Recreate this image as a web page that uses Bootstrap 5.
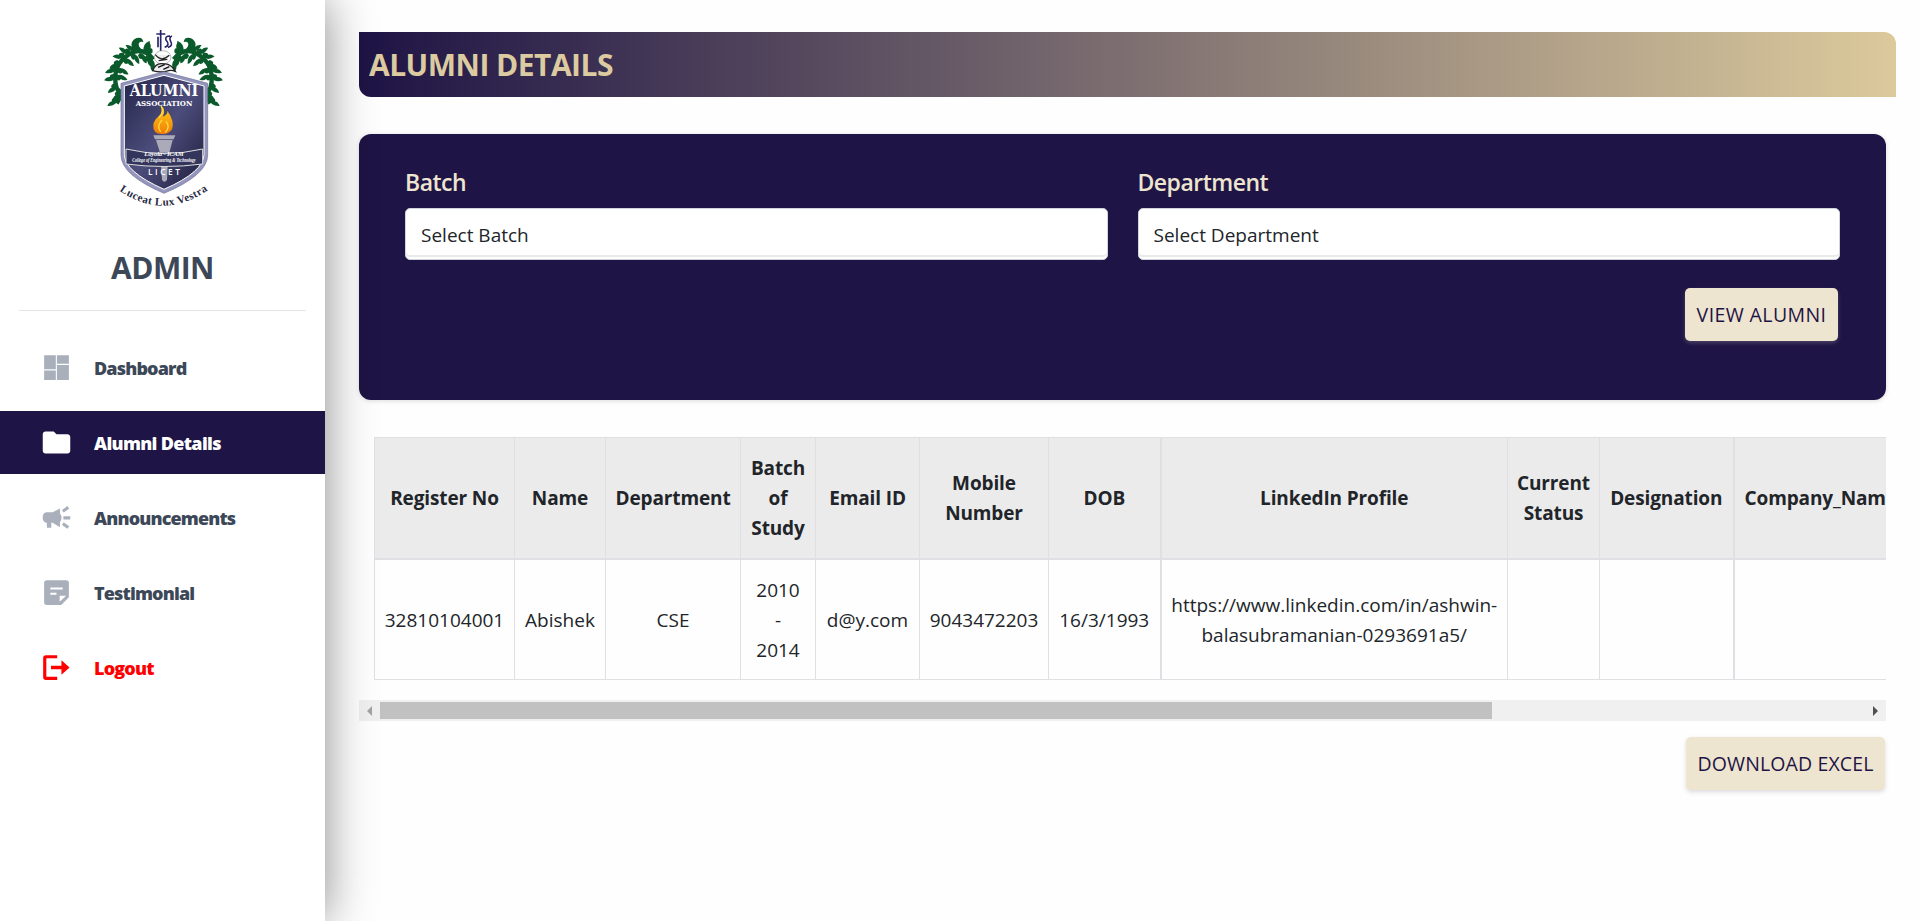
<!DOCTYPE html>
<html lang="en">
<head>
<meta charset="utf-8">
<meta name="viewport" content="width=device-width, initial-scale=1">
<title>Alumni Details</title>
<link href="https://cdn.jsdelivr.net/npm/bootstrap@5.3.0/dist/css/bootstrap.min.css" rel="stylesheet">
<style>
body{font-family:"Open Sans","Noto Sans",sans-serif;font-size:19px;background:#fefefe;color:#212529;height:921px;overflow:hidden}
.side{width:325px;height:921px;background:#fff;box-shadow:0 0 45px rgba(0,0,0,.46);z-index:2}
.crest{width:150px;height:195px;margin:20px 0 0 90px}
.role{font-size:30px;line-height:36px;font-weight:700;letter-spacing:-.5px;color:#3c4858;margin-top:35px}
.rule{height:1px;background:#e5e5e5;margin:24px 19px 25px}
.menu{gap:12px}
.menu a{height:63px;padding-left:40px;font-weight:800;font-size:18px;letter-spacing:-.85px;color:#3c4858;text-decoration:none}
.menu span{padding-top:2px}
.menu svg{width:33px;height:33px;fill:#a9afbb;margin:-1px 21px 0 0;flex:none}
.menu a.current{background:#1e1445;color:#fff;letter-spacing:-.68px}
.menu a.current svg{fill:#fff}
.menu a.leave{color:#f00}
.menu a.leave svg{fill:#f00}
.main{padding:32px 24px 0 34px}
.titlebar{height:65px;padding-left:10px;background:linear-gradient(90deg,#1e1445,#dcca9c);border-radius:0 12px 0 12px}
.titlebar h1{font-size:30px;font-weight:700;letter-spacing:-.52px;color:#dccaa0;margin:0}
.panel{height:266px;margin:37px 10px 0 0;padding:32px 46px 0;background:#1e1445;border-radius:12px;box-shadow:0 1px 5px rgba(0,0,0,.14)}
.panel label{font-size:23px;line-height:32px;font-weight:600;letter-spacing:-.5px;color:#eee5d0;margin-bottom:10px}
.panel .row{--bs-gutter-x:30px}
.picker{height:52px;background:#fff;border:1px solid #ced4da;border-radius:5px;padding:1px 0 0 15px;line-height:50px;box-shadow:inset 0 -2px #fff,inset 0 -4px #e9ebeb}
.gold{height:53px;background:#eee5d0;color:#1e1445;font-size:19.5px;border:0;border-radius:5px;padding:0;box-shadow:0 2px 4px rgba(160,150,160,.35)}
.gold:hover{background:#eee5d0}
.view{width:153px;letter-spacing:.4px}
.download{width:199px;letter-spacing:.12px}
.view-row{padding:28px 2px 0 0}
.download-row{padding:16px 11px 0 0}
.scroller{margin:37px 10px 0 0;padding-left:15px;overflow:hidden}
.scroller table{table-layout:fixed;width:1860px;margin:0;border-collapse:collapse;text-align:center;line-height:30px}
.scroller th,.scroller td{border:1px solid #dee0e3;height:121px;padding:1px 0 0;vertical-align:middle}
.scroller th{background:#ebebeb;font-weight:700;letter-spacing:-.12px;border-bottom-width:2px}
.scroller .thick{border-left-width:2px}
.scroller .company{text-align:left;padding-left:10px}
.track{height:21px;margin:20px 10px 0 0;background:#f0f0f0;padding:0 7px 0 8px}
.thumb{width:1112px;height:17px;background:#c1c1c1;margin-left:7px}
</style>
</head>
<body>
<div class="d-flex">
<aside class="side position-relative flex-shrink-0 d-flex flex-column">
<svg class="crest flex-shrink-0" viewBox="0 0 450 585">
<defs>
<linearGradient id="navy" x1="0" y1="0" x2="1" y2="1"><stop offset="0" stop-color="#24254a"/><stop offset=".5" stop-color="#4d4d7c"/><stop offset="1" stop-color="#1d1d3c"/></linearGradient>
<linearGradient id="fire" x1="0" y1="0" x2="0" y2="1"><stop offset="0" stop-color="#ffd21c"/><stop offset="1" stop-color="#f07c06"/></linearGradient>
<path id="motto" d="M88 512Q220 604 358 508"/>
<path id="leaf" d="M0 2Q6-20 32-18Q28-6 18-4Q22 4 8 8Z"/>
<g id="garland" fill="#0b5a2c">
<path d="M190 118Q160 80 122 100Q78 125 76 170T98 218L80 250" fill="none" stroke="#0b5a2c" stroke-width="13"/>
<use href="#leaf" transform="translate(176 102) rotate(-60)"/><use href="#leaf" transform="translate(160 94) rotate(-30)"/><use href="#leaf" transform="translate(138 94) rotate(-120)"/><use href="#leaf" transform="translate(118 102) rotate(-120)"/><use href="#leaf" transform="translate(104 110) rotate(-150)"/><use href="#leaf" transform="translate(90 128) rotate(180)"/><use href="#leaf" transform="translate(80 146) rotate(190)"/><use href="#leaf" transform="translate(78 172) rotate(195)"/><use href="#leaf" transform="translate(82 196) rotate(170)"/><use href="#leaf" transform="translate(92 216) rotate(160)"/><use href="#leaf" transform="translate(84 240) rotate(180)"/>
<use href="#leaf" transform="translate(84 144) rotate(60)"/><use href="#leaf" transform="translate(78 166) rotate(50)"/><use href="#leaf" transform="translate(104 114) rotate(70)"/><use href="#leaf" transform="translate(130 100) rotate(90)"/><use href="#leaf" transform="translate(152 98) rotate(90)"/><use href="#leaf" transform="translate(172 106) rotate(100)"/><use href="#leaf" transform="translate(188 118) rotate(120)"/>
<path d="M134 98Q112 66 140 54Q158 50 160 66Q146 62 146 74Q148 86 164 92Z"/>
</g>
</defs>
<use href="#garland"/><use href="#garland" transform="matrix(-1 0 0 1 441 0)"/>
<path fill="none" stroke="#26246b" stroke-width="5" d="M212 30v64M199 42h27M204 50v32M224 82q18-6 4-22q-4-12 12-12M246 48q-10 4-4 16q8 14-8 18"/>
<ellipse cx="218" cy="112" rx="25" ry="20" fill="#fff" stroke="#999" stroke-width="2"/>
<path d="M196 104q18 24 42 2M206 122l26-4M188 152q10-26 34-20q20-2 34 22q-12-5-20-2q-22 8-48 0z" fill="#eee" stroke="#222" stroke-width="4"/>
<path d="M204 142l20-8M220 148l18-8" stroke="#111" stroke-width="4"/>
<path d="M93 190L222 155L353 190V405Q353 465 222 520Q93 465 93 405Z" fill="#9596bd" stroke="#707197" stroke-width="2"/>
<path d="M103 198L222 166L342 198V403Q342 455 222 508Q103 455 103 403Z" fill="url(#navy)" stroke="#fff" stroke-width="3"/>
<path d="M190 346h66l-5 12h-56zM198 360h50l-10 38h-28zM210 400h25l-4 80q-8 10-15 0z" fill="#aaaab9"/>
<path d="M212 255Q230 270 218 290Q235 282 232 272Q255 305 246 328Q235 344 216 342Q188 342 190 315Q192 300 206 289Q222 276 212 255Z" fill="url(#fire)"/>
<path d="M216 300Q198 320 212 336M228 304Q242 320 226 337M213 258Q224 275 207 293" fill="none" stroke="#ffd943" stroke-width="4"/>
<path d="M108 387Q222 414 338 387V432Q222 447 108 432Z" fill="#34355c" stroke="#ddd" stroke-width="3"/>
<g fill="#fff" text-anchor="middle">
<text x="222" y="229" textLength="206" font-family="DejaVu Serif" font-weight="700" font-size="48" lengthAdjust="spacingAndGlyphs">ALUMNI</text>
<text x="222" y="257" textLength="170" font-family="DejaVu Serif" font-weight="700" font-size="24" lengthAdjust="spacingAndGlyphs">ASSOCIATION</text>
<text x="222" y="409" textLength="118" font-family="Liberation Serif" font-style="italic" font-weight="700" font-size="20">Loyola - ICAM</text>
<text x="222" y="427" textLength="190" lengthAdjust="spacingAndGlyphs" font-family="Liberation Serif" font-style="italic" font-weight="700" font-size="18">College of Engineering &amp; Technology</text>
<text x="222" y="466" textLength="96" font-family="Open Sans" font-weight="600" font-size="25">LICET</text>
</g>
<text font-family="Liberation Serif" font-size="33" font-weight="700" fill="#292a42"><textPath href="#motto" textLength="285">Luceat Lux Vestra</textPath></text>
</svg>
<div class="role text-center">ADMIN</div>
<div class="rule"></div>
<nav class="menu d-flex flex-column">
<a href="#" class="d-flex align-items-center"><svg viewBox="0 0 24 24"><path d="M3 3h8.500v10.200H3zM12.300 3H21v6.300h-8.700zM12.300 10.200H21V21h-8.700zM3 14.100h8.500V21H3z"/></svg><span>Dashboard</span></a>
<a href="#" class="d-flex align-items-center current"><svg viewBox="0 0 24 24"><path d="M10 4H4c-1.100 0-2 .9-2 2v12c0 1.100.9 2 2 2h16c1.100 0 2-.9 2-2V8c0-1.100-.9-2-2-2h-8l-2-2z"/></svg><span>Alumni Details</span></a>
<a href="#" class="d-flex align-items-center"><svg viewBox="0 0 24 24"><path d="M17 11v2.400h5V11zM16 17.400l4 2.800 1.200-1.900-4-2.800zM21.200 5.600L20 3.700l-4 2.800 1.200 1.900zM5 8.200a3 3 0 0 0-3 3v1.600a3 3 0 0 0 3 3V19.500h3.200v-3.700h1l5.300 3.200v-3.600q2.400-3.200 0-6.400V5.500L9.200 8.200z"/></svg><span>Announcements</span></a>
<a href="#" class="d-flex align-items-center"><svg viewBox="0 0 24 24"><path fill-rule="evenodd" d="M5 3h14a2 2 0 0 1 2 2v10.500L15.500 21H5a2 2 0 0 1-2-2V5a2 2 0 0 1 2-2zM7.500 8.300v1.500h9V8.300zM7.500 12.200v1.500H12v-1.500zM14.300 14.300v4.500l4.700-4.500z"/></svg><span>Testimonial</span></a>
<a href="#" class="d-flex align-items-center leave"><svg viewBox="0 0 24 24"><path d="M12.500 3v2.200H4.600v13.600h7.900V21H4.300A2 2 0 0 1 2.300 19V5a2 2 0 0 1 2-2zM8 10.800h7.600V6.800L21.500 12l-5.900 5.200v-4H8z"/></svg><span>Logout</span></a>
</nav>
</aside>
<main class="main flex-grow-1 overflow-hidden">
<div class="titlebar d-flex align-items-center"><h1>ALUMNI DETAILS</h1></div>
<section class="panel">
<div class="row">
<div class="col-6"><label class="d-block">Batch</label><div class="picker">Select Batch</div></div>
<div class="col-6"><label class="d-block">Department</label><div class="picker">Select Department</div></div>
</div>
<div class="view-row d-flex justify-content-end"><button class="btn gold view">VIEW ALUMNI</button></div>
</section>
<div class="scroller">
<table>
<colgroup><col style="width:140px"><col style="width:91px"><col style="width:135px"><col style="width:75px"><col style="width:104px"><col style="width:129px"><col style="width:112px"><col style="width:347px"><col style="width:92px"><col style="width:134px"><col></colgroup>
<thead><tr><th>Register No</th><th>Name</th><th>Department</th><th>Batch<br>of<br>Study</th><th>Email ID</th><th>Mobile<br>Number</th><th>DOB</th><th class="thick">LinkedIn Profile</th><th>Current<br>Status</th><th>Designation</th><th class="thick company">Company_Name</th></tr></thead>
<tbody><tr><td>32810104001</td><td>Abishek</td><td>CSE</td><td>2010<br>-<br>2014</td><td>d@y.com</td><td>9043472203</td><td>16/3/1993</td><td class="thick">https://www.linkedin.com/in/ashwin-<br>balasubramanian-0293691a5/</td><td></td><td></td><td class="thick"></td></tr></tbody>
</table>
</div>
<div class="track d-flex align-items-center"><svg width="6" height="10"><path d="M5 0v10L0 5z" fill="#a3a3a3"/></svg><div class="thumb"></div><svg class="ms-auto" width="6" height="10"><path d="M0 0v10l5-5z" fill="#505050"/></svg></div>
<div class="download-row d-flex justify-content-end"><button class="btn gold download">DOWNLOAD EXCEL</button></div>
</main>
</div>
<script src="https://cdn.jsdelivr.net/npm/bootstrap@5.3.0/dist/js/bootstrap.bundle.min.js"></script>
</body>
</html>
